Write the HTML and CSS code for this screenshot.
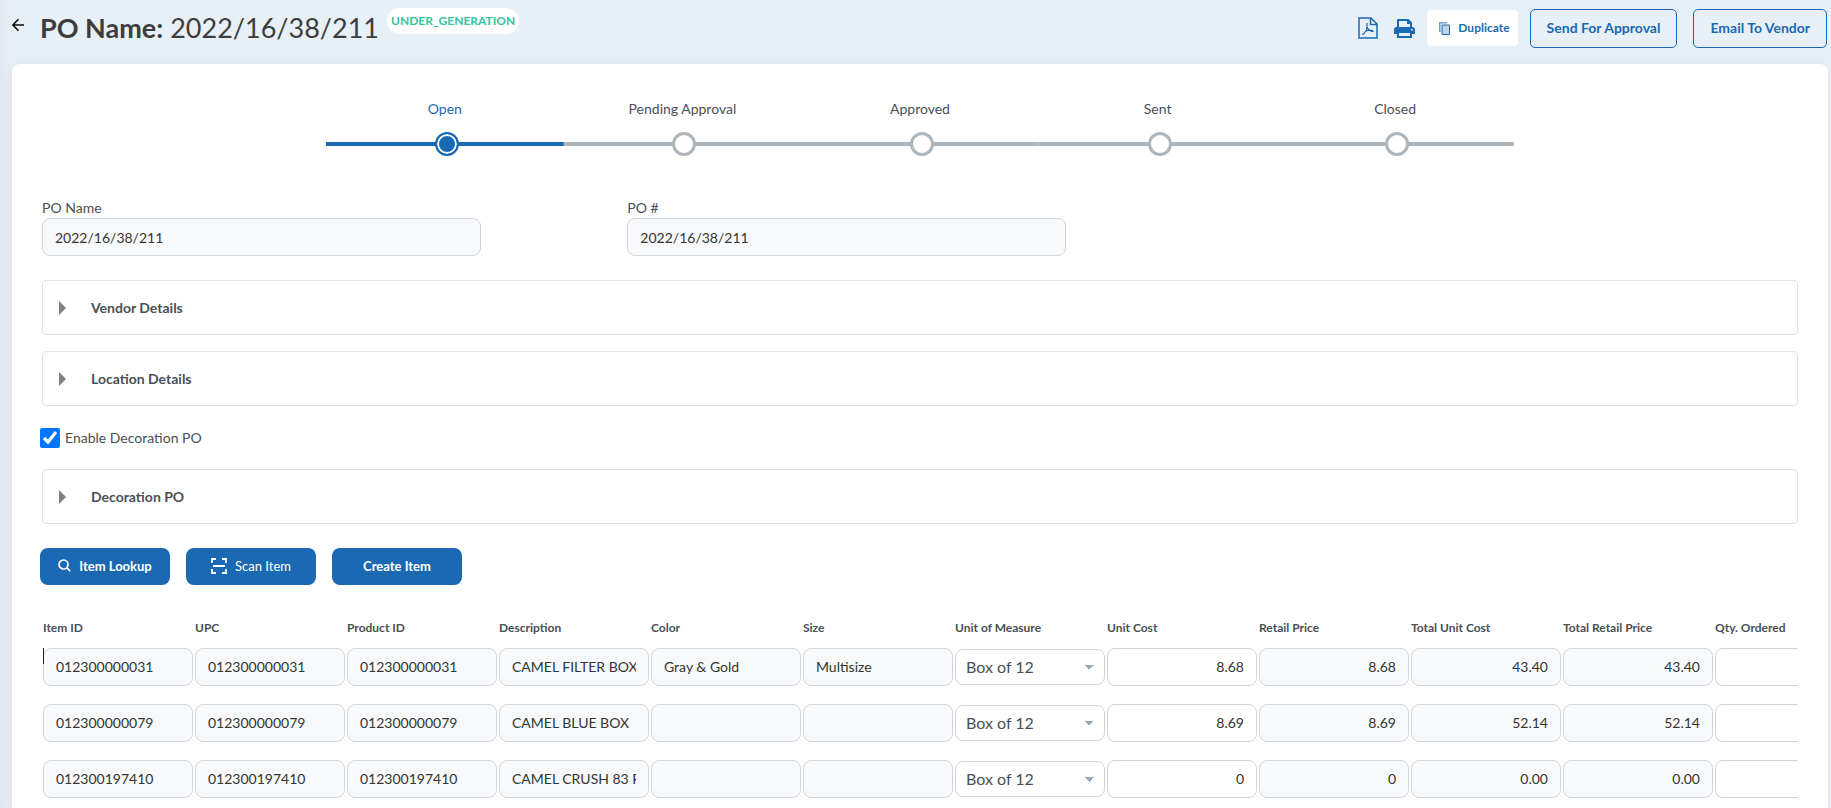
FILE: index.html
```html
<!DOCTYPE html>
<html lang="en">
  <head>
    <meta charset="utf-8">
    <title>PO Name: 2022/16/38/211</title>
    <link rel="stylesheet" href="styles.css">
  </head>

  <body>
    <header class="page-header">
      <button class="icon-btn back-btn" aria-label="Back">
        <svg width="12" height="14" viewBox="0 0 12 14" fill="none" stroke="#111" stroke-width="1.6"><path d="M12 7H1M6.5 1.2L.9 7l5.6 5.8"/></svg>
      </button>
      <h1 class="page-title"><b>PO Name:</b> 2022/16/38/211</h1>
      <span class="status-badge">UNDER_GENERATION</span>

      <div class="header-actions">
        <button class="icon-btn" aria-label="PDF">
          <svg width="20" height="22" viewBox="0 0 20 22" fill="none" stroke="#1b69b2" stroke-width="1.5"><path d="M1 1h12l6 6v14H1z"/><path d="M12.500 1v6.500H19"/><path stroke-width="1.2" d="M9 6c.3 3.500.2 5.500-.8 7.500-1 1.800-2.500 3.500-4.200 4.200M9.200 10.500c1.200 2.500 3 3.600 6.300 4.200M7.600 14.200c2.500-1 5-1.200 7.600-.7"/></svg>
        </button>
        <button class="icon-btn" aria-label="Print">
          <svg width="21" height="19" viewBox="0 0 21 19"><path fill="#1b69b2" d="M4 0h10.500L18 3.500V8h.5A2.500 2.500 0 0 1 21 10.500V15h-3v4H3v-4H0v-4.500A2.500 2.500 0 0 1 2.500 8H3V1a1 1 0 0 1 1-1z"/><path fill="#e8f0f7" d="M5 2h8v3h3v3H5zM5 14h11v3H5z"/><circle cx="18" cy="10.700" r=".9" fill="#e8f0f7"/></svg>
        </button>
        <button class="btn-duplicate">
          <svg width="11" height="13" viewBox="0 0 11 13" fill="none" stroke="#1b69b2"><path stroke="#6d9fcf" stroke-width="1.600" d="M.8 10V.8H8"/><path fill="#bdd3e9" d="M3 3h7.500v9.500H3z"/></svg>
          Duplicate
        </button>
        <button class="btn-outline">Send For Approval</button>
        <button class="btn-outline">Email To Vendor</button>
      </div>
    </header>

    <main class="card">
      <ol class="stepper">
        <li class="step active"><span class="step-label">Open</span><span class="step-track"><i class="step-dot"></i></span></li>
        <li class="step"><span class="step-label">Pending Approval</span><span class="step-track"><i class="step-dot"></i></span></li>
        <li class="step"><span class="step-label">Approved</span><span class="step-track"><i class="step-dot"></i></span></li>
        <li class="step"><span class="step-label">Sent</span><span class="step-track"><i class="step-dot"></i></span></li>
        <li class="step"><span class="step-label">Closed</span><span class="step-track"><i class="step-dot"></i></span></li>
      </ol>

      <div class="form-row">
        <div class="form-field">
          <label for="po-name">PO Name</label>
          <input type="text" id="po-name" class="field" value="2022/16/38/211" readonly>
        </div>
        <div class="form-field">
          <label for="po-number">PO #</label>
          <input type="text" id="po-number" class="field" value="2022/16/38/211" readonly>
        </div>
      </div>

      <button class="panel" aria-expanded="false"><span class="panel-arrow"></span>Vendor Details</button>
      <button class="panel" aria-expanded="false"><span class="panel-arrow"></span>Location Details</button>

      <div class="check-row">
        <input type="checkbox" id="enable-decoration" checked>
        <label for="enable-decoration">Enable Decoration PO</label>
      </div>

      <button class="panel" aria-expanded="false"><span class="panel-arrow"></span>Decoration PO</button>

      <div class="item-actions">
        <button class="btn-primary">
          <svg width="13" height="13" viewBox="0 0 13 13" fill="none" stroke="#fff" stroke-width="1.7"><circle cx="5.500" cy="5.500" r="4.500"/><path d="M8.700 8.700l3.500 3.500"/></svg>
          Item Lookup
        </button>
        <button class="btn-primary btn-scan">
          <svg width="16" height="16" viewBox="0 0 16 16" fill="none" stroke="#fff" stroke-width="1.800"><path d="M1 5V1h4M11 1h4v4M15 11v4h-4M5 15H1v-4M2 8h12"/></svg>
          Scan Item
        </button>
        <button class="btn-primary">Create Item</button>
      </div>

      <div class="table-wrap">
        <table class="items">
          <thead>
            <tr>
              <th>Item ID</th>
              <th>UPC</th>
              <th>Product ID</th>
              <th>Description</th>
              <th>Color</th>
              <th>Size</th>
              <th>Unit of Measure</th>
              <th>Unit Cost</th>
              <th>Retail Price</th>
              <th>Total Unit Cost</th>
              <th>Total Retail Price</th>
              <th>Qty. Ordered</th>
            </tr>
          </thead>
          <tbody>
            <tr>
              <td class="current"><input class="field" aria-label="Item ID" value="012300000031" readonly></td>
              <td><input class="field" aria-label="UPC" value="012300000031" readonly></td>
              <td><input class="field" aria-label="Product ID" value="012300000031" readonly></td>
              <td><input class="field" aria-label="Description" value="CAMEL FILTER BOX" readonly></td>
              <td><input class="field" aria-label="Color" value="Gray &amp; Gold" readonly></td>
              <td><input class="field" aria-label="Size" value="Multisize" readonly></td>
              <td><select class="unit" aria-label="Unit of Measure"><option>Box of 12</option></select></td>
              <td><input class="field num" aria-label="Unit Cost" value="8.68"></td>
              <td><input class="field num" aria-label="Retail Price" value="8.68" readonly></td>
              <td><input class="field num" aria-label="Total Unit Cost" value="43.40" readonly></td>
              <td><input class="field num" aria-label="Total Retail Price" value="43.40" readonly></td>
              <td><input class="field num" aria-label="Qty. Ordered"></td>
            </tr>
            <tr>
              <td><input class="field" aria-label="Item ID" value="012300000079" readonly></td>
              <td><input class="field" aria-label="UPC" value="012300000079" readonly></td>
              <td><input class="field" aria-label="Product ID" value="012300000079" readonly></td>
              <td><input class="field" aria-label="Description" value="CAMEL BLUE BOX" readonly></td>
              <td><input class="field" aria-label="Color" readonly></td>
              <td><input class="field" aria-label="Size" readonly></td>
              <td><select class="unit" aria-label="Unit of Measure"><option>Box of 12</option></select></td>
              <td><input class="field num" aria-label="Unit Cost" value="8.69"></td>
              <td><input class="field num" aria-label="Retail Price" value="8.69" readonly></td>
              <td><input class="field num" aria-label="Total Unit Cost" value="52.14" readonly></td>
              <td><input class="field num" aria-label="Total Retail Price" value="52.14" readonly></td>
              <td><input class="field num" aria-label="Qty. Ordered"></td>
            </tr>
            <tr>
              <td><input class="field" aria-label="Item ID" value="012300197410" readonly></td>
              <td><input class="field" aria-label="UPC" value="012300197410" readonly></td>
              <td><input class="field" aria-label="Product ID" value="012300197410" readonly></td>
              <td><input class="field" aria-label="Description" value="CAMEL CRUSH 83 F" readonly></td>
              <td><input class="field" aria-label="Color" readonly></td>
              <td><input class="field" aria-label="Size" readonly></td>
              <td><select class="unit" aria-label="Unit of Measure"><option>Box of 12</option></select></td>
              <td><input class="field num" aria-label="Unit Cost" value="0"></td>
              <td><input class="field num" aria-label="Retail Price" value="0" readonly></td>
              <td><input class="field num" aria-label="Total Unit Cost" value="0.00" readonly></td>
              <td><input class="field num" aria-label="Total Retail Price" value="0.00" readonly></td>
              <td><input class="field num" aria-label="Qty. Ordered"></td>
            </tr>
          </tbody>
        </table>
      </div>
    </main>
  </body>
</html>
```

FILE: styles.css
```css
* {
  box-sizing: border-box;
}

body {
  margin: 0;
  min-height: 100vh;
  display: flex;
  flex-direction: column;
  background: linear-gradient(to right, #e2e9f2, #e8f0f7 12px);
  color: #495057;
  font-family: Lato, sans-serif;
  font-size: 14px;
  line-height: 20px;
}

button,
input,
select {
  font: inherit;
  color: inherit;
}

button {
  cursor: pointer;
}

/* header */
.page-header {
  display: flex;
  align-items: center;
  height: 64px;
  padding: 0 4px 8px 12px;
}

.icon-btn {
  display: flex;
  padding: 0;
  border: 0;
  background: none;
}

.back-btn {
  margin-bottom: 6px;
}

.page-title {
  margin: 0 0 0 16px;
  font-size: 27px;
  font-weight: 400;
  line-height: 36px;
  color: #3d3d3d;
}

.status-badge {
  align-self: flex-start;
  margin: 8px 0 0 8px;
  padding: 0 4px;
  border-radius: 13px;
  background: #fff;
  color: #34c3a0;
  font-size: 12px;
  font-weight: 700;
  line-height: 26px;
}

.header-actions {
  display: flex;
  align-items: center;
  margin-left: auto;
  gap: 16px;
  color: #1b69b2;
}

.btn-duplicate {
  display: flex;
  align-items: center;
  gap: 8px;
  height: 36px;
  margin: 0 -4px;
  padding: 0 8px 0 12px;
  border: 0;
  border-radius: 4px;
  background: #fff;
  font-size: 12px;
  font-weight: 700;
}

.btn-outline {
  height: 39px;
  padding: 0 16px;
  border: 1px solid #1b69b2;
  border-radius: 5px;
  background: none;
  font-weight: 700;
}

/* card */
.card {
  flex: 1;
  min-width: 0;
  margin: 0 3px 0 12px;
  padding: 35px 30px 0;
  border-radius: 8px 8px 0 0;
  background: #fff;
  box-shadow: 0 0 24px rgba(60, 80, 120, 0.08);
}

.stepper {
  display: flex;
  width: 1188px;
  max-width: 100%;
  margin: 0 auto;
  padding: 0;
  list-style: none;
}

.step {
  flex: 1;
  text-align: center;
}

.step-label {
  display: block;
  margin-bottom: 13px;
}

.step-track {
  display: flex;
  align-items: center;
  justify-content: center;
  height: 24px;
  background: linear-gradient(#adb5bd, #adb5bd) center / 100% 4px no-repeat;
}

.step-dot {
  width: 24px;
  height: 24px;
  margin-left: 4px;
  border: 3px solid #adb5bd;
  border-radius: 50%;
  background: #fff;
}

.step.active .step-label {
  color: #1b69b2;
}

.step.active .step-track {
  background-image: linear-gradient(#1b69b2, #1b69b2);
}

.step.active .step-dot {
  border: 2px solid #1b69b2;
  background: #1b69b2;
  box-shadow: inset 0 0 0 2px #fff;
}

/* form */
.form-row {
  display: grid;
  grid-template-columns: repeat(3, 1fr);
  margin: 42px 0 24px;
}

.form-field label {
  display: block;
}

.form-field .field {
  width: 75%;
}

.field {
  display: block;
  width: 100%;
  height: 38px;
  padding: 0 12px;
  border: 1px solid #ced4da;
  border-radius: 8px;
  background: #fff;
  color: #343434;
}

.field:read-only {
  background: #f8f9fb;
}

.panel {
  display: flex;
  align-items: center;
  width: 100%;
  height: 55px;
  margin-bottom: 16px;
  padding: 0 16px;
  border: 1px solid #dee2e6;
  border-radius: 4px;
  background: #fff;
  font-weight: 700;
}

.panel-arrow {
  margin-right: 25px;
  border: 7px solid transparent;
  border-right-width: 0;
  border-left-color: #808080;
}

.check-row {
  display: flex;
  align-items: center;
  gap: 5px;
  margin: 22px 0 21px -2px;
}

.check-row input {
  width: 20px;
  height: 20px;
  margin: 0;
  accent-color: #0075ff;
}

.item-actions {
  display: flex;
  gap: 16px;
  margin: 24px 0 33px -2px;
}

.btn-primary {
  display: flex;
  align-items: center;
  justify-content: center;
  gap: 8px;
  width: 130px;
  height: 37px;
  padding: 0 0 2px;
  border: 0;
  border-radius: 8px;
  background: #1b69b2;
  color: #fff;
  font-size: 13px;
  font-weight: 700;
}

.btn-scan {
  font-weight: 400;
}

/* items table */
.table-wrap {
  overflow: hidden;
}

.items {
  width: 1824px;
  table-layout: fixed;
  border-collapse: collapse;
}

.items th {
  height: 20px;
  padding: 0 1px 10px;
  font-size: 12px;
  font-weight: 700;
  text-align: left;
}

.items td {
  position: relative;
  height: 56px;
  padding: 0 1px 18px;
}

.items .field {
  padding-bottom: 2px;
}

/* text cursor on the current row */
.items .current::before {
  content: "";
  position: absolute;
  top: 0;
  left: 1px;
  width: 1px;
  height: 16px;
  background: #222;
}

.num {
  text-align: right;
}

.unit {
  display: block;
  appearance: none;
  width: 100%;
  height: 36px;
  padding: 0 10px;
  border: 1px solid #ced4da;
  border-radius: 8px;
  background-color: #fff;
  background-image:
    linear-gradient(to top right, transparent 50%, #98a6b5 50%),
    linear-gradient(to top left, transparent 50%, #98a6b5 50%);
  background-position: right 15px center, right 10px center;
  background-repeat: no-repeat;
  background-size: 5px 5px;
  font-size: 16px;
}
```
